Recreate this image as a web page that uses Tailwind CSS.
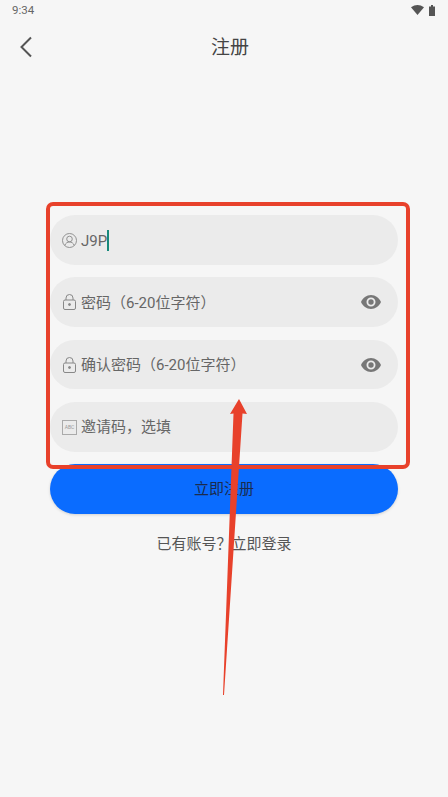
<!DOCTYPE html>
<html lang="zh">
<head>
  <meta charset="UTF-8" />
  <title>注册</title>
  <script src="https://cdn.jsdelivr.net/npm/@tailwindcss/browser@4"></script>
</head>
<body class="bg-[#f6f6f6] font-['Roboto','Noto_Sans_CJK_SC',sans-serif]">
  <div class="relative w-[448px] h-[797px] overflow-hidden">
    <!-- status bar -->
    <div class="h-5 pl-3 pr-[13px] flex items-center justify-between text-[#666] text-[11.500px]">
      <span class="mt-[2px]">9:34</span>
      <div class="flex items-center gap-[5px]">
        <svg width="13" height="10" viewBox="0 0 13 10"><path d="M0 2.2Q6.500-2 13 2.200L6.500 10Z" fill="#555"/></svg>
        <svg width="6" height="11" viewBox="0 0 6 11"><path d="M2 0H4V1.500H6V11H0V1.500H2Z" fill="#555"/></svg>
      </div>
    </div>

    <!-- header -->
    <div class="h-[54px] relative flex items-center justify-center pl-3">
      <svg class="absolute left-[19px] top-[16px]" width="14" height="22" viewBox="0 0 14 22" fill="none"><path d="M12 1.500L2.500 11L12 20.500" stroke="#555" stroke-width="2"/></svg>
      <h1 class="mt-[2px] text-[19px] text-[#444]">注册</h1>
    </div>

    <!-- form -->
    <div class="mt-[141px] mx-[50px] flex flex-col">
      <div class="h-[50px] rounded-full bg-[#ebebeb] flex items-center pl-3 pr-[17px] text-[#666] text-[15px]">
        <svg class="mr-1" width="15" height="15" viewBox="0 0 15 15" fill="none" stroke="#888" stroke-width="0.900"><circle cx="7.500" cy="7.500" r="7"/><circle cx="7.500" cy="6" r="2.800"/><path d="M2.800 12.500C3.500 10 5.500 9 7.500 9S11.500 10 12.200 12.500"/></svg>
        <span class="mt-[2px]">J9P</span>
        <span class="w-[2px] h-[21px] bg-[#17897b]"></span>
      </div>

      <div class="mt-3 h-[50px] rounded-full bg-[#ebebeb] flex items-center pl-[13px] pr-[17px] text-[#666] text-[15px]">
        <svg class="mr-[5px]" width="13" height="16" viewBox="0 0 13 16" fill="none" stroke="#888" stroke-width="1"><rect x="0.500" y="6" width="12" height="9.500" rx="1.500"/><path d="M3 6V4A3.500 3.500 0 0 1 10 4V6"/><circle cx="6.500" cy="10.500" r="1" fill="#888"/></svg>
        <span class="mt-[2px] flex-1">密码（6-20位字符）</span>
        <svg width="20" height="14" viewBox="0 0 20 14"><path fill-rule="evenodd" d="M10 0C5.500 0 1.800 2.900 0 7C1.800 11.100 5.500 14 10 14S18.200 11.100 20 7C18.200 2.900 14.500 0 10 0ZM10 2.500A4.500 4.500 0 1 1 10 11.500A4.500 4.500 0 1 1 10 2.500Z" fill="#777"/><circle cx="10" cy="7" r="2.700" fill="#777"/></svg>
      </div>

      <div class="mt-[13px] h-[49px] rounded-full bg-[#ebebeb] flex items-center pl-[13px] pr-[17px] text-[#666] text-[15px]">
        <svg class="mr-[5px]" width="13" height="16" viewBox="0 0 13 16" fill="none" stroke="#888" stroke-width="1"><rect x="0.500" y="6" width="12" height="9.500" rx="1.500"/><path d="M3 6V4A3.500 3.500 0 0 1 10 4V6"/><circle cx="6.500" cy="10.500" r="1" fill="#888"/></svg>
        <span class="mt-[2px] flex-1">确认密码（6-20位字符）</span>
        <svg width="20" height="14" viewBox="0 0 20 14"><path fill-rule="evenodd" d="M10 0C5.500 0 1.800 2.900 0 7C1.800 11.100 5.500 14 10 14S18.200 11.100 20 7C18.200 2.900 14.500 0 10 0ZM10 2.500A4.500 4.500 0 1 1 10 11.500A4.500 4.500 0 1 1 10 2.500Z" fill="#777"/><circle cx="10" cy="7" r="2.700" fill="#777"/></svg>
      </div>

      <div class="mt-[13px] h-[50px] rounded-full bg-[#ebebeb] flex items-center pl-3 pr-[17px] text-[#666] text-[15px]">
        <div class="mr-1 w-[15px] h-[15px] border border-[#aaa] flex items-center justify-center text-[5px] leading-none text-[#999]">ABC</div>
        <span>邀请码，选填</span>
      </div>

      <button class="mt-3 h-[50px] rounded-full bg-[#0a6cff] text-[#1b2b4d] text-[15px] shadow-[0_1px_3px_rgba(0,0,0,0.15)]">立即注册</button>

      <p class="mt-[19px] text-center text-[15px] text-[#555]">已有账号？立即登录</p>
    </div>

    <!-- red annotation box -->
    <div class="absolute left-[46px] top-[202px] w-[364px] h-[267px] border-4 border-[#e8412b] rounded-[7px]"></div>

    <!-- red annotation arrow -->
    <svg class="absolute left-0 top-0" width="448" height="797" viewBox="0 0 448 797">
      <path d="M239 399L247 414L242.500 413.500L224 695H223L233.500 413.500L230 414Z" fill="#e8412b"/>
    </svg>
  </div>
</body>
</html>
